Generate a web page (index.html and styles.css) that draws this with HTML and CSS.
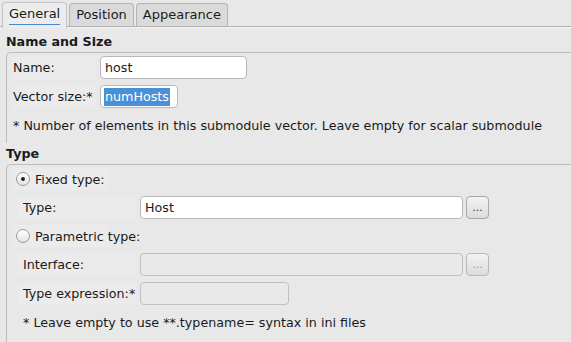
FILE: index.html
```html
<!DOCTYPE html>
<html lang="en">
<head>
    <meta charset="UTF-8">
    <title>Submodule Properties</title>
    <link rel="stylesheet" href="styles.css">
</head>
<body>
    <div class="tabs">
        <div class="tab active"><span>General</span></div>
        <div class="tab">Position</div>
        <div class="tab">Appearance</div>
    </div>

    <div class="page">
        <h2 class="group-title">Name and Size</h2>
        <div class="group">
            <div class="row">
                <label class="label">Name:</label>
                <div class="input name-input">host</div>
            </div>
            <div class="row">
                <label class="label">Vector size:*</label>
                <div class="input size-input"><span class="selected">numHosts</span></div>
            </div>
            <p class="note">* Number of elements in this submodule vector. Leave empty for scalar submodule</p>
        </div>

        <h2 class="group-title type-title">Type</h2>
        <div class="group">
            <div class="radio-row">
                <span class="radio checked"></span>Fixed type:
            </div>
            <div class="row indent">
                <label class="label wide">Type:</label>
                <div class="input long-input">Host</div>
                <button class="browse">...</button>
            </div>
            <div class="radio-row">
                <span class="radio"></span>Parametric type:
            </div>
            <div class="row indent">
                <label class="label wide">Interface:</label>
                <div class="input long-input disabled"></div>
                <button class="browse disabled">...</button>
            </div>
            <div class="row indent">
                <label class="label wide">Type expression:*</label>
                <div class="input expr-input disabled"></div>
            </div>
            <p class="note indent">* Leave empty to use **.typename= syntax in ini files</p>
        </div>
    </div>
</body>
</html>
```

FILE: styles.css
```css
body {
    margin: 0;
    background-color: #e8e8e8;
    font-family: "DejaVu Sans", sans-serif;
    font-size: 12.7px;
    color: #1a1a1a;
    width: 571px;
    height: 342px;
    overflow: hidden;
}

/* Tab strip */
.tabs {
    display: flex;
    gap: 2px;
    padding: 2px 0 0 2px;
    border-bottom: 1px solid #b0b0b0;
    box-shadow: 0 1px 0 #f6f6f6;
    height: 24px;
}

.tab {
    padding: 0 6px;
    line-height: 22px;
    font-size: 13px;
    background-color: #dadada;
    border: 1px solid #b4b4b4;
    border-bottom: none;
    border-radius: 4px 4px 0 0;
    margin-top: 1px;
}

.tab.active {
    background-color: #ececec;
    margin-top: 0;
    height: 25px;
    border-color: #c4c4c4;
}

.tab.active span {
    display: inline-block;
    line-height: 20px;
    border-bottom: 1px solid #4a86d0;
}

/* Page content */
.page {
    padding: 0 0 0 6px;
}

.group-title {
    margin: 0;
    font-size: 12.7px;
    font-weight: bold;
    line-height: 20px;
    padding-top: 5px;
}

.type-title {
    padding-top: 1px;
    line-height: 20px;
}

.group {
    border: 1px solid #bdbdbd;
    border-right: none;
    border-bottom: none;
    border-radius: 5px 0 0 0;
    padding: 3px 0 0 5px;
}

.row {
    display: flex;
    align-items: center;
    gap: 4px;
    margin-bottom: 6px;
}

.row + .radio-row {
    margin-top: 3px;
}

.indent {
    padding-left: 10px;
}

.label {
    width: 84px;
    height: 22px;
    line-height: 22px;
    padding-left: 1px;
    background-color: #ebebeb;
    box-sizing: border-box;
    white-space: nowrap;
}

.label.wide {
    width: 118px;
    padding-left: 5px;
    margin-left: -4px;
}

.input {
    height: 23px;
    box-sizing: border-box;
    background-color: #ffffff;
    border: 1px solid #b8b8b8;
    border-radius: 4px;
    padding: 0 4px;
    line-height: 21px;
}

.input.disabled {
    background-color: #e9e9e9;
    border-color: #c0c0c0;
}

.name-input {
    width: 147px;
}

.size-input {
    width: 78px;
    padding-left: 3px;
}

.selected {
    background-color: #4a90d9;
    color: #ffffff;
    padding: 1px 1px 2px 1px;
}

.long-input {
    width: 323px;
}

.expr-input {
    width: 149px;
}

.browse {
    width: 23px;
    height: 23px;
    margin-left: -1px;
    padding: 0;
    border: 1px solid #a8a8a8;
    border-radius: 4px;
    background: linear-gradient(#f2f2f2, #dcdcdc);
    font-family: "DejaVu Sans", sans-serif;
    font-size: 11px;
    color: #333333;
}

.browse.disabled {
    color: #999999;
    border-color: #b8b8b8;
}

.note {
    margin: 0;
    padding: 4px 0 9px 1px;
    line-height: 16px;
    white-space: nowrap;
}

.note.indent {
    padding: 4px 0 14px 11px;
}

.radio-row {
    display: flex;
    align-items: center;
    gap: 5px;
    width: 93px;
    height: 22px;
    padding-left: 4px;
    margin-bottom: 6px;
    background-color: #ebebeb;
    white-space: nowrap;
}

.radio {
    width: 12px;
    height: 12px;
    border: 1px solid #9a9a9a;
    border-radius: 50%;
    background: linear-gradient(#ffffff, #e4e4e4);
    position: relative;
    flex: none;
}

.radio.checked::after {
    content: "";
    position: absolute;
    left: 4px;
    top: 4px;
    width: 4px;
    height: 4px;
    border-radius: 50%;
    background-color: #222222;
}
```
